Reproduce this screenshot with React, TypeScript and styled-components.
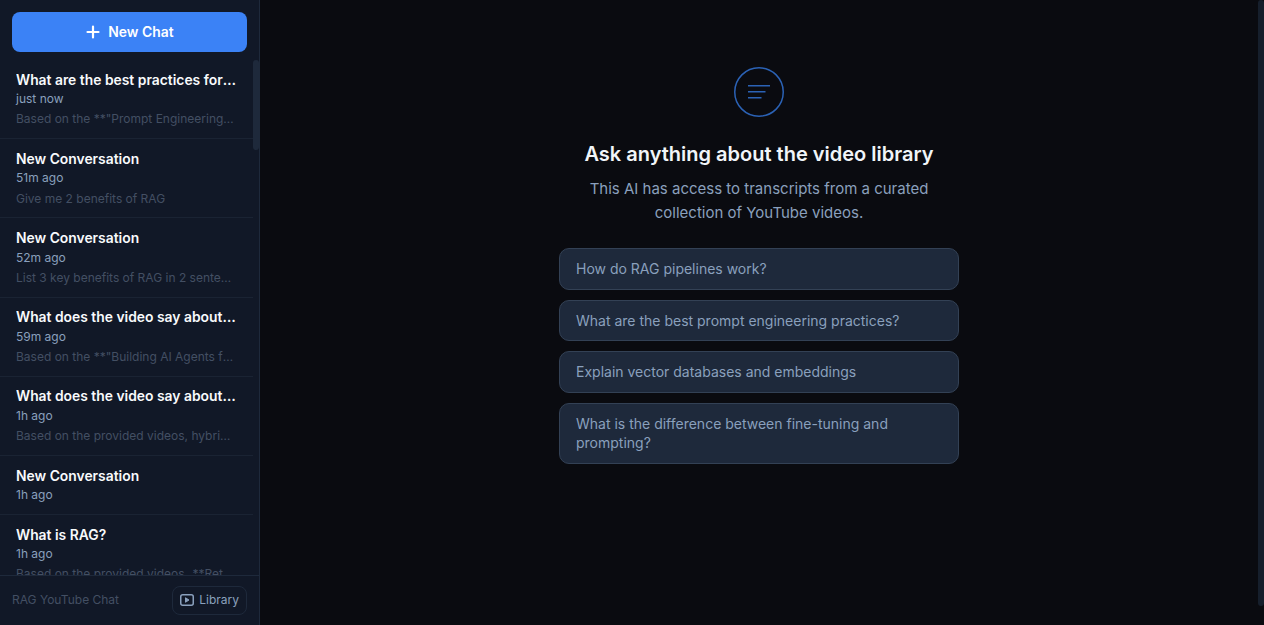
import * as React from 'react';
import styled, { createGlobalStyle } from 'styled-components';

const GlobalStyle = createGlobalStyle`
  html, body, #root {
    height: 100%;
    margin: 0;
  }
  body {
    background: #0a0b10;
    font-family: Inter, "Liberation Sans", sans-serif;
    overflow: hidden;
  }
  * {
    box-sizing: border-box;
  }
`;

const Shell = styled.div`
  display: flex;
  height: 100vh;
`;

const Sidebar = styled.aside`
  width: 260px;
  flex: none;
  display: flex;
  flex-direction: column;
  background: #111827;
  border-right: 1px solid #1e293b;
`;

const SidebarTop = styled.div`
  padding: 12px 12px 8px;
`;

const NewChatButton = styled.button`
  width: 100%;
  height: 40px;
  display: flex;
  align-items: center;
  justify-content: center;
  gap: 7px;
  border: 0;
  border-radius: 8px;
  background: #3b82f6;
  color: #fff;
  font: 600 13.92px Inter, sans-serif;
`;

const ListArea = styled.div`
  flex: 1;
  min-height: 0;
  display: flex;
`;

const ChatList = styled.div`
  flex: 1;
  min-width: 0;
  overflow: hidden;
`;

const ScrollRail = styled.div`
  width: 6px;
  flex: none;
`;

const ScrollThumb = styled.div<{ $height: number; $color: string }>`
  height: ${({ $height }) => $height}px;
  background: ${({ $color }) => $color};
  border-radius: 3px;
`;

const ChatItem = styled.div`
  padding: 10.5px 16px 9.7px;
  border-bottom: 1px solid #1a2333;
`;

const ChatTitle = styled.div`
  color: #f8fafc;
  font-size: 13.86px;
  font-weight: 600;
  line-height: 19.5px;
  white-space: nowrap;
  overflow: hidden;
  text-overflow: ellipsis;
`;

const ChatTime = styled.div`
  color: #8aa0bd;
  font-size: 12px;
  line-height: 16.8px;
  margin: 1.25px 0 0.25px;
`;

const ChatPreview = styled.div`
  color: #434f63;
  font-size: 12px;
  line-height: 17px;
  margin: 2.25px 0 1.25px;
  white-space: nowrap;
  overflow: hidden;
  text-overflow: ellipsis;
`;

const SidebarFooter = styled.div`
  height: 50px;
  flex: none;
  display: flex;
  align-items: center;
  justify-content: space-between;
  padding: 0 12px;
  border-top: 1px solid #1e293b;
`;

const FooterLabel = styled.span`
  color: #434f63;
  font-size: 12px;
  margin-bottom: 2px;
`;

const LibraryButton = styled.button`
  height: 29px;
  display: flex;
  align-items: center;
  gap: 5px;
  padding: 0 7px 2px;
  background: transparent;
  border: 1px solid #1e293b;
  border-radius: 8px;
  color: #8aa0bd;
  font: 400 12px Inter, sans-serif;
`;

const Main = styled.main`
  flex: 1;
  min-width: 0;
  display: flex;
`;

const Welcome = styled.div`
  flex: 1;
  min-width: 0;
  display: flex;
  flex-direction: column;
  align-items: center;
  padding-top: 67px;
`;

const Heading = styled.h1`
  margin: 24px 0 0;
  color: #f1f5f9;
  font-size: 20px;
  font-weight: 600;
  line-height: 26px;
`;

const Intro = styled.p`
  width: 400px;
  margin: 10px 0 0;
  color: #8aa0bd;
  font-size: 15px;
  line-height: 24px;
  text-align: center;
`;

const Prompts = styled.div`
  width: 400px;
  margin-top: 23px;
  display: flex;
  flex-direction: column;
  gap: 10px;
`;

const Prompt = styled.button`
  padding: 10px 16px;
  background: #1e293b;
  border: 1px solid #334155;
  border-radius: 10px;
  color: #8aa0bd;
  font: 400 14px/19.5px Inter, sans-serif;
  text-align: left;
`;

const chats = [
  { title: 'What are the best practices for prompt engineering?', time: 'just now', preview: 'Based on the **"Prompt Engineering Guide" video' },
  { title: 'New Conversation', time: '51m ago', preview: 'Give me 2 benefits of RAG' },
  { title: 'New Conversation', time: '52m ago', preview: 'List 3 key benefits of RAG in 2 sentences please' },
  { title: 'What does the video say about agents?', time: '59m ago', preview: 'Based on the **"Building AI Agents from scratch' },
  { title: 'What does the video say about hybrid search?', time: '1h ago', preview: 'Based on the provided videos, hybrid search combines' },
  { title: 'New Conversation', time: '1h ago' },
  { title: 'What is RAG?', time: '1h ago', preview: 'Based on the provided videos, \u200a**Retrieval' },
];

const prompts = [
  'How do RAG pipelines work?',
  'What are the best prompt engineering practices?',
  'Explain vector databases and embeddings',
  'What is the difference between fine-tuning and prompting?',
];

export default function App() {
  return (
    <Shell>
      <GlobalStyle />
      <Sidebar>
        <SidebarTop>
          <NewChatButton>
            <svg width="16" height="16" viewBox="0 0 16 16" fill="none" stroke="currentColor" strokeWidth="2.2" strokeLinecap="round">
              <path d="M8 2.5v11M2.5 8h11" />
            </svg>
            New Chat
          </NewChatButton>
        </SidebarTop>
        <ListArea>
          <ChatList>
            {chats.map((chat, i) => (
              <ChatItem key={i}>
                <ChatTitle>{chat.title}</ChatTitle>
                <ChatTime>{chat.time}</ChatTime>
                {chat.preview && <ChatPreview>{chat.preview}</ChatPreview>}
              </ChatItem>
            ))}
          </ChatList>
          <ScrollRail>
            <ScrollThumb $height={90} $color="#1e293b" />
          </ScrollRail>
        </ListArea>
        <SidebarFooter>
          <FooterLabel>RAG YouTube Chat</FooterLabel>
          <LibraryButton>
            <svg width="14" height="12" viewBox="0 0 14 12" fill="none" stroke="currentColor" strokeWidth="1.5" strokeLinejoin="round">
              <rect x="0.75" y="0.75" width="12.5" height="10.5" rx="2" />
              <path d="M5.5 3.75L9 6 5.5 8.25z" fill="currentColor" strokeWidth="1" />
            </svg>
            Library
          </LibraryButton>
        </SidebarFooter>
      </Sidebar>
      <Main>
        <Welcome>
          <svg width="50" height="50" viewBox="0 0 50 50" fill="none" stroke="#2b62b5" strokeWidth="1.5">
            <circle cx="25" cy="25" r="24.25" />
            <path d="M14 18.75h22M14 24.75h17.5M14 30.75h13.5" />
          </svg>
          <Heading>Ask anything about the video library</Heading>
          <Intro>This AI has access to transcripts from a curated collection of YouTube videos.</Intro>
          <Prompts>
            {prompts.map(text => (
              <Prompt key={text}>{text}</Prompt>
            ))}
          </Prompts>
        </Welcome>
        <ScrollRail>
          <ScrollThumb $height={606} $color="#161f2c" />
        </ScrollRail>
      </Main>
    </Shell>
  );
}
